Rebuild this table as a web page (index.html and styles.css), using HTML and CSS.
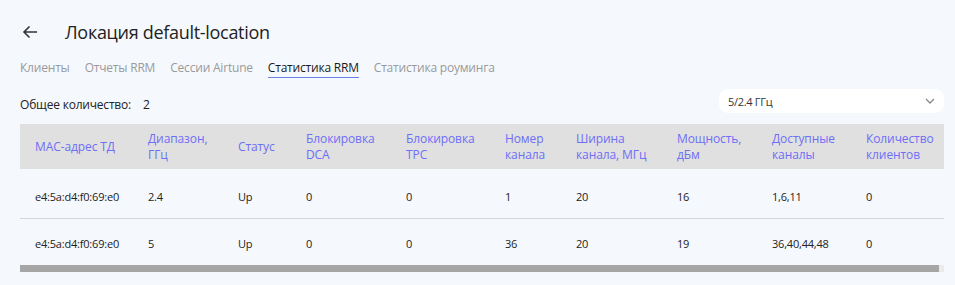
FILE: index.html
```html
<!DOCTYPE html>
<html lang="ru">
<head>
<meta charset="utf-8">
<title>Локация default-location</title>
<link rel="stylesheet" href="styles.css">
</head>
<body>
<div class="page">
  <div class="title-row">
    <svg class="back" width="16" height="14" viewBox="0 0 16 14"><path d="M15 7H2M7.5 1.5L2 7l5.5 5.5" fill="none" stroke="#333" stroke-width="1.6"/></svg>
    <h1 class="title">Локация default-location</h1>
  </div>
  <nav class="tabs">
    <span class="tab">Клиенты</span>
    <span class="tab">Отчеты RRM</span>
    <span class="tab">Сессии Airtune</span>
    <span class="tab active">Статистика RRM</span>
    <span class="tab">Статистика роуминга</span>
  </nav>
  <div class="toolbar">
    <div class="total">Общее количество:<span class="num">2</span></div>
    <div class="select">
      <span>5/2.4 ГГц</span>
      <svg width="10" height="6" viewBox="0 0 10 6"><path d="M1 1l4 4 4-4" fill="none" stroke="#888" stroke-width="1.3"/></svg>
    </div>
  </div>
  <div class="table-wrap">
    <table class="grid">
      <colgroup>
        <col class="c1"><col class="c2"><col class="c3"><col class="c4"><col class="c5"><col class="c6"><col class="c7"><col class="c8"><col class="c9"><col class="c10">
      </colgroup>
      <thead>
        <tr>
          <th class="first">MAC-адрес ТД</th>
          <th>Диапазон,<br>ГГц</th>
          <th>Статус</th>
          <th>Блокировка<br>DCA</th>
          <th>Блокировка<br>TPC</th>
          <th>Номер<br>канала</th>
          <th>Ширина<br>канала, МГц</th>
          <th>Мощность,<br>дБм</th>
          <th>Доступные<br>каналы</th>
          <th>Количество<br>клиентов</th>
        </tr>
      </thead>
      <tbody>
        <tr class="r1">
          <td class="first">e4:5a:d4:f0:69:e0</td><td>2.4</td><td>Up</td><td>0</td><td>0</td><td>1</td><td>20</td><td>16</td><td>1,6,11</td><td>0</td>
        </tr>
        <tr class="r2">
          <td class="first">e4:5a:d4:f0:69:e0</td><td>5</td><td>Up</td><td>0</td><td>0</td><td>36</td><td>20</td><td>19</td><td>36,40,44,48</td><td>0</td>
        </tr>
      </tbody>
    </table>
    <div class="scroll"><div class="thumb"></div></div>
  </div>
</div>
</body>
</html>
```

FILE: styles.css
```css
html, body {
  margin: 0;
  padding: 0;
  background: #f5f8fd;
}
body {
  font-family: "Open Sans", "Noto Sans", sans-serif;
  color: #222;
}
.page {
  padding: 17px 11px 0 20px;
}
.title-row {
  display: flex;
  align-items: center;
  height: 30px;
}
.back {
  margin-left: 2px;
  margin-right: 27px;
}
.title {
  margin: 0;
  font-size: 18px;
  font-weight: 400;
  color: #222;
  letter-spacing: -0.3px;
}
.tabs {
  display: flex;
  gap: 15px;
  margin-top: 12px;
  height: 20px;
}
.tab {
  font-size: 12px;
  font-weight: 500;
  color: #9a9a9a;
  line-height: 17px;
  letter-spacing: -0.2px;
  border-bottom: 1.5px solid transparent;
  height: 18px;
}
.tab.active {
  color: #1a1a1a;
  border-bottom-color: #6b7fe6;
}
.toolbar {
  display: flex;
  justify-content: space-between;
  align-items: center;
  margin-top: 10px;
  height: 24px;
}
.total {
  font-size: 12px;
  font-weight: 500;
  color: #222;
  letter-spacing: -0.2px;
  padding-top: 7px;
}
.total .num {
  margin-left: 12px;
}
.select {
  width: 225px;
  height: 24px;
  box-sizing: border-box;
  background: #fff;
  border-radius: 9px;
  display: flex;
  align-items: center;
  justify-content: space-between;
  padding: 0 9px 0 9px;
  font-size: 11px;
  color: #333;
  letter-spacing: -0.3px;
}
.table-wrap {
  margin-top: 11px;
  width: 924px;
}
.grid {
  border-collapse: collapse;
  width: 924px;
  table-layout: fixed;
}
.c1 { width: 113px; }
.c2 { width: 90px; }
.c3 { width: 68px; }
.c4 { width: 100px; }
.c5 { width: 99px; }
.c6 { width: 71px; }
.c7 { width: 101px; }
.c8 { width: 95px; }
.c9 { width: 94px; }
.c10 { width: 93px; }
thead tr {
  background: #e0e0e0;
  height: 45px;
}
th {
  text-align: left;
  font-weight: 400;
  font-size: 12px;
  line-height: 16px;
  color: #6e6ef6;
  padding: 0 0 0 15px;
  vertical-align: middle;
  white-space: nowrap;
  letter-spacing: -0.1px;
}
td {
  font-size: 11px;
  color: #222;
  padding: 0 0 0 15px;
  letter-spacing: -0.2px;
}
.r1 td {
  border-bottom: 1px solid #d6d6d6;
  height: 43px;
  padding-top: 6px;
}
.r2 td {
  height: 43px;
  padding-top: 3px;
}
.scroll {
  height: 7px;
  background: #ebebeb;
}
.thumb {
  width: 919px;
  height: 7px;
  background: #a6a6a6;
}
```
